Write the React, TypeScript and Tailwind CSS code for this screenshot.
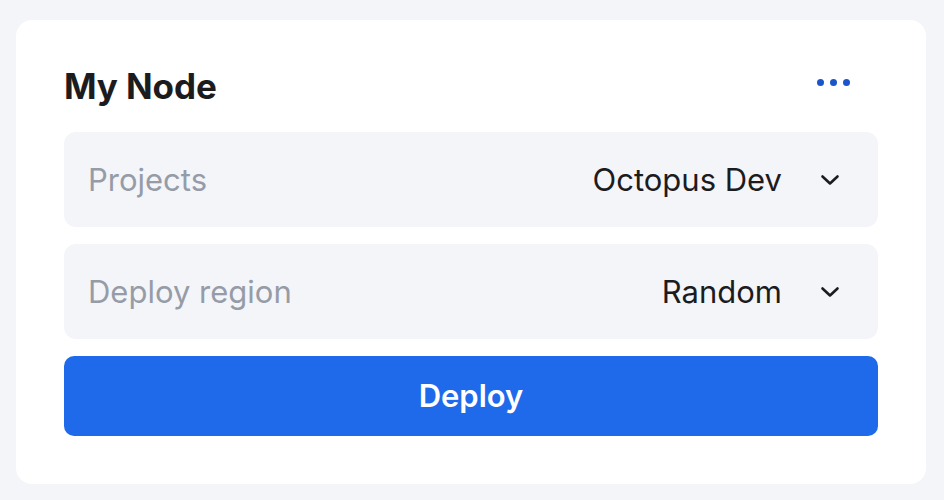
import React from 'react';

// 노드 배포 카드
const selects = [
  { label: 'Projects', value: 'Octopus Dev' },
  { label: 'Deploy region', value: 'Random' },
];

function Chevron() {
  return (
    <svg width="20" height="12" viewBox="0 0 20 12" fill="none" className="shrink-0">
      <path d="M2.5 2.5 L10 9.5 L17.5 2.5" stroke="#1c1c1e" strokeWidth="2.6" strokeLinecap="round" strokeLinejoin="round" />
    </svg>
  );
}

export default function App() {
  return (
    <div
      className="w-[944px] h-[500px] bg-[#f4f5f9] pt-[20px] pl-[16px] pr-[18px]"
      style={{ fontFamily: 'Inter, "Noto Sans", sans-serif' }}
    >
      <div className="bg-white rounded-2xl px-12 pt-[41px] pb-12 flex flex-col">
        {/* 타이틀 */}
        <div className="h-12 mb-[23px] flex items-center justify-between">
          <span className="text-[35px] font-bold text-[#1c1c1e] tracking-[-0.1px] leading-none pt-[2px]">My Node</span>
          <button className="mr-[28px] mb-[6px] flex items-center gap-[6px]">
            <span className="w-[7px] h-[7px] rounded-full bg-[#1a56c9]" />
            <span className="w-[7px] h-[7px] rounded-full bg-[#1a56c9]" />
            <span className="w-[7px] h-[7px] rounded-full bg-[#1a56c9]" />
          </button>
        </div>

        {/* 선택 영역 */}
        <div className="flex flex-col gap-[17px]">
          {selects.map(s => (
            <div
              key={s.label}
              className="h-[95px] rounded-xl bg-[#f4f5f9] pl-6 pr-[38px] flex items-center justify-between"
            >
              <span className="text-[31px] text-[#969ca7] pt-[2px]">{s.label}</span>
              <div className="flex items-center gap-[38px]">
                <span className="text-[31px] text-[#1c1c1e] pt-[2px]">{s.value}</span>
                <Chevron />
              </div>
            </div>
          ))}
          <button className="h-20 rounded-[10px] bg-[#1f6aeb] text-white text-[31px] font-semibold">
            Deploy
          </button>
        </div>
      </div>
    </div>
  );
}
